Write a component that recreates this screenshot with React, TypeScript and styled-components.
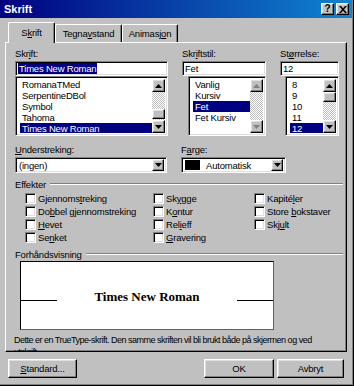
import styled, { createGlobalStyle, css } from "styled-components";

const GlobalStyle = createGlobalStyle`
  html, body {
    margin: 0;
    padding: 0;
    background: #c0c0c0;
  }
  body {
    font-family: "Liberation Sans", Arial, sans-serif;
    font-size: 9.5px;
    letter-spacing: -0.2px;
    color: #000;
  }
  * {
    box-sizing: border-box;
  }
`

const raised = css`
  border-top: 1px solid #fff;
  border-left: 1px solid #fff;
  border-right: 1px solid #000;
  border-bottom: 1px solid #000;
  box-shadow: inset -1px -1px #808080, inset 1px 1px #dfdfdf;
  background: #c0c0c0;
`

const sunken = css`
  border-top: 1px solid #808080;
  border-left: 1px solid #808080;
  border-right: 1px solid #fff;
  border-bottom: 1px solid #fff;
  box-shadow: inset 1px 1px #000, inset -1px -1px #dfdfdf;
  background: #fff;
`

const Window = styled.div`
  width: 354px;
  height: 386px;
  display: flex;
  flex-direction: column;
  background: #c0c0c0;
  border-right: 1px solid #000;
  border-bottom: 1px solid #000;
  box-shadow: inset -1px -1px #808080;
  padding: 0 1px 1px 0;
`

const TitleBar = styled.div`
  height: 18px;
  display: flex;
  align-items: center;
  padding: 0 3px 0 4px;
  background: linear-gradient(to right, #000080, #1084d0);
  color: #fff;
  font-weight: bold;
  font-size: 11px;
  letter-spacing: 0;
`

const TitleButtons = styled.div`
  margin-left: auto;
  display: flex;
  gap: 2px;
`

const TitleButton = styled.div`
  ${raised};
  width: 13px;
  height: 12px;
  display: flex;
  align-items: center;
  justify-content: center;
  color: #000;
  font-size: 10px;
  font-weight: bold;
  line-height: 1;
`

const Body = styled.div`
  flex: 1;
  padding: 4px 5px 0 5px;
  display: flex;
  flex-direction: column;
`

const TabStrip = styled.div`
  height: 20px;
  display: flex;
  align-items: flex-end;
  padding-left: 3px;
`

const Tab = styled.div<{ $active?: boolean; $w: number }>`
  width: ${p => p.$w}px;
  height: ${p => (p.$active ? 21 : 18)}px;
  margin-bottom: ${p => (p.$active ? -1 : 0)}px;
  position: relative;
  z-index: ${p => (p.$active ? 1 : 0)};
  background: #c0c0c0;
  border-top: 1px solid #fff;
  border-left: 1px solid #fff;
  border-right: 1px solid #000;
  border-radius: 2px 2px 0 0;
  box-shadow: inset -1px 0 #808080;
  display: flex;
  align-items: center;
  justify-content: center;
  padding-bottom: ${p => (p.$active ? 2 : 0)}px;
`

const Panel = styled.div`
  height: 310px;
  border-top: 1px solid #fff;
  border-left: 1px solid #fff;
  border-right: 1px solid #000;
  border-bottom: 1px solid #000;
  box-shadow: inset -1px -1px #808080;
  padding: 5px 8px 0 9px;
  overflow: hidden;
`

const FieldGrid = styled.div<{ $cols: string; $top?: number }>`
  display: grid;
  grid-template-columns: ${p => p.$cols};
  column-gap: 14px;
  margin-top: ${p => p.$top ?? 0}px;
`

const Field = styled.div`
  display: flex;
  flex-direction: column;
`

const Label = styled.div`
  height: 12px;
  line-height: 12px;
  margin-bottom: 1px;
  white-space: nowrap;
`

const TextBox = styled.div`
  ${sunken};
  height: 15px;
  padding: 0 2px;
  display: flex;
  align-items: center;
  line-height: 11px;
  white-space: nowrap;
`

const Selected = styled.span`
  background: #000080;
  color: #fff;
  padding: 0 1px;
`

const ListBox = styled.div<{ $indent?: number }>`
  ${sunken};
  height: 60px;
  margin-left: ${p => p.$indent ?? 0}px;
  display: flex;
  padding: 2px;
`

const Items = styled.div`
  flex: 1;
  padding-left: 2px;
  overflow: hidden;
`

const Item = styled.div<{ $selected?: boolean }>`
  height: 11px;
  line-height: 11px;
  padding-left: 2px;
  white-space: nowrap;
  background: ${p => (p.$selected ? "#000080" : "transparent")};
  color: ${p => (p.$selected ? "#fff" : "#000")};
`

const ScrollBar = styled.div`
  width: 13px;
  display: flex;
  flex-direction: column;
`

const ArrowButton = styled.div`
  ${raised};
  height: 13px;
  display: flex;
  align-items: center;
  justify-content: center;
`

const Track = styled.div<{ $thumb?: "start" | "end" }>`
  flex: 1;
  display: flex;
  flex-direction: column;
  justify-content: ${p => (p.$thumb === "end" ? "flex-end" : "flex-start")};
  padding-bottom: ${p => (p.$thumb === "end" ? 1 : 0)}px;
  background-color: #c0c0c0;
  background-image: repeating-conic-gradient(#fff 0 25%, #c0c0c0 0 50%);
  background-size: 2px 2px;
`

const Thumb = styled.div`
  ${raised};
  height: 10px;
`

const Combo = styled.div`
  ${sunken};
  height: 16px;
  display: flex;
  align-items: center;
  padding: 2px;
`

const ComboValue = styled.div`
  flex: 1;
  display: flex;
  align-items: center;
  padding-left: 1px;
  white-space: nowrap;
`

const Swatch = styled.div`
  width: 15px;
  height: 10px;
  background: #000;
  margin: 0 6px 0 0;
`

const DropButton = styled.div`
  ${raised};
  width: 12px;
  height: 12px;
  display: flex;
  align-items: center;
  justify-content: center;
`

const Section = styled.div<{ $top: number }>`
  display: flex;
  align-items: center;
  height: 12px;
  margin-top: ${p => p.$top}px;
  margin-right: -5px;
`

const Rule = styled.div`
  flex: 1;
  margin-left: 4px;
  border-top: 1px solid #808080;
  border-bottom: 1px solid #fff;
`

const CheckGrid = styled.div`
  display: grid;
  grid-template-columns: 128px 101px 1fr;
  grid-template-rows: repeat(4, 13px);
  grid-auto-flow: column;
  padding-left: 10px;
  margin-top: 2px;
`

const CheckItem = styled.div`
  display: flex;
  align-items: center;
  gap: 2px;
  white-space: nowrap;
`

const CheckBox = styled.div`
  ${sunken};
  width: 11px;
  height: 11px;
`

const PreviewBox = styled.div`
  width: 254px;
  height: 69px;
  margin: 1px 0 0 5px;
  background: #fff;
  border: 1px solid #000;
  border-right-color: #606060;
  border-bottom-color: #606060;
  padding-top: 27px;
`

const PreviewRow = styled.div`
  display: flex;
  align-items: baseline;
`

const PreviewLine = styled.div`
  width: 36px;
  height: 1px;
  background: #000;
`

const PreviewText = styled.div`
  flex: 1;
  text-align: center;
  font-family: "Liberation Serif", "Times New Roman", serif;
  font-weight: bold;
  font-size: 13px;
  line-height: 16px;
  letter-spacing: 0;
`

const Description = styled.div`
  margin: 4px 0 0 -1px;
  font-size: 9px;
  letter-spacing: -0.5px;
  line-height: 12px;
`

const ButtonRow = styled.div`
  display: flex;
  gap: 3px;
  margin-top: 7px;
  padding: 0 3px;
`

const Button = styled.div<{ $w: number }>`
  ${raised};
  width: ${p => p.$w}px;
  height: 19px;
  display: flex;
  align-items: center;
  justify-content: center;
  &:first-child {
    margin-right: auto;
  }
`

const Up = ({ disabled }: { disabled?: boolean }) => (
  <svg width="7" height="4" viewBox="0 0 7 4">
    <polygon points="3.5,0 7,4 0,4" fill={disabled ? "#808080" : "#000"} />
  </svg>
)

const Down = ({ disabled }: { disabled?: boolean }) => (
  <svg width="7" height="4" viewBox="0 0 7 4">
    <polygon points="0,0 7,0 3.5,4" fill={disabled ? "#808080" : "#000"} />
  </svg>
)

const Scroll = ({ thumb, disabled }: { thumb?: "start" | "end"; disabled?: boolean }) => (
  <ScrollBar>
    <ArrowButton><Up disabled={disabled} /></ArrowButton>
    <Track $thumb={thumb}>{thumb && <Thumb />}</Track>
    <ArrowButton><Down disabled={disabled} /></ArrowButton>
  </ScrollBar>
)

const fonts = ["RomanaTMed", "SerpentineDBol", "Symbol", "Tahoma", "Times New Roman"]
const styles = ["Vanlig", "Kursiv", "Fet", "Fet Kursiv"]
const sizes = ["8", "9", "10", "11", "12"]

const effects: [string, string, string][] = [
  ["Gjennoms", "t", "reking"],
  ["Do", "b", "bel gjennomstreking"],
  ["", "H", "evet"],
  ["Se", "n", "ket"],
  ["Sk", "y", "gge"],
  ["K", "o", "ntur"],
  ["Rel", "i", "eff"],
  ["", "G", "ravering"],
  ["Kapité", "l", "er"],
  ["Store ", "b", "okstaver"],
  ["Skj", "u", "lt"],
]

export default function App() {
  return (
    <>
      <GlobalStyle />
      <Window>
        <TitleBar>
          Skrift
          <TitleButtons>
            <TitleButton>?</TitleButton>
            <TitleButton>
              <svg width="8" height="7" viewBox="0 0 8 7">
                <path d="M0 0h2l2 2.3L6 0h2L5 3.5 8 7H6L4 4.7 2 7H0l3-3.5z" fill="#000" />
              </svg>
            </TitleButton>
          </TitleButtons>
        </TitleBar>
        <Body>
          <TabStrip>
            <Tab $active $w={47}>S<u>k</u>rift</Tab>
            <Tab $w={67}>Tegna<u>v</u>stand</Tab>
            <Tab $w={56}>Animasj<u>o</u>n</Tab>
          </TabStrip>
          <Panel>
            <FieldGrid $cols="153px 84px 59px">
              <Field>
                <Label>Skr<u>i</u>ft:</Label>
                <TextBox><Selected>Times New Roman</Selected></TextBox>
                <ListBox>
                  <Items>
                    {fonts.map(f => (
                      <Item key={f} $selected={f === "Times New Roman"}>{f}</Item>
                    ))}
                  </Items>
                  <Scroll thumb="end" />
                </ListBox>
              </Field>
              <Field>
                <Label>Skr<u>i</u>ftstil:</Label>
                <TextBox>Fet</TextBox>
                <ListBox $indent={6}>
                  <Items>
                    {styles.map(s => (
                      <Item key={s} $selected={s === "Fet"}>{s}</Item>
                    ))}
                  </Items>
                  <Scroll disabled />
                </ListBox>
              </Field>
              <Field>
                <Label>St<u>ø</u>rrelse:</Label>
                <TextBox>12</TextBox>
                <ListBox $indent={5}>
                  <Items>
                    {sizes.map(s => (
                      <Item key={s} $selected={s === "12"}>{s}</Item>
                    ))}
                  </Items>
                  <Scroll thumb="start" />
                </ListBox>
              </Field>
            </FieldGrid>

            <FieldGrid $cols="152px 105px" $top={8}>
              <Field>
                <Label><u>U</u>nderstreking:</Label>
                <Combo>
                  <ComboValue>(ingen)</ComboValue>
                  <DropButton><Down /></DropButton>
                </Combo>
              </Field>
              <Field>
                <Label>F<u>a</u>rge:</Label>
                <Combo>
                  <ComboValue><Swatch />Automatisk</ComboValue>
                  <DropButton><Down /></DropButton>
                </Combo>
              </Field>
            </FieldGrid>

            <Section $top={5}>
              Effekter
              <Rule />
            </Section>
            <CheckGrid>
              {effects.map(([a, k, b]) => (
                <CheckItem key={a + k + b}>
                  <CheckBox />
                  <span>{a}<u>{k}</u>{b}</span>
                </CheckItem>
              ))}
            </CheckGrid>

            <Section $top={4}>
              Forhåndsvisning
              <Rule />
            </Section>
            <PreviewBox>
              <PreviewRow>
                <PreviewLine />
                <PreviewText>Times New Roman</PreviewText>
                <PreviewLine />
              </PreviewRow>
            </PreviewBox>
            <Description>
              Dette er en TrueType-skrift. Den samme skriften vil bli brukt både på skjermen og ved utskrift.
            </Description>
          </Panel>
          <ButtonRow>
            <Button $w={69}><span><u>S</u>tandard...</span></Button>
            <Button $w={70}>OK</Button>
            <Button $w={67}>Avbryt</Button>
          </ButtonRow>
        </Body>
      </Window>
    </>
  )
}
